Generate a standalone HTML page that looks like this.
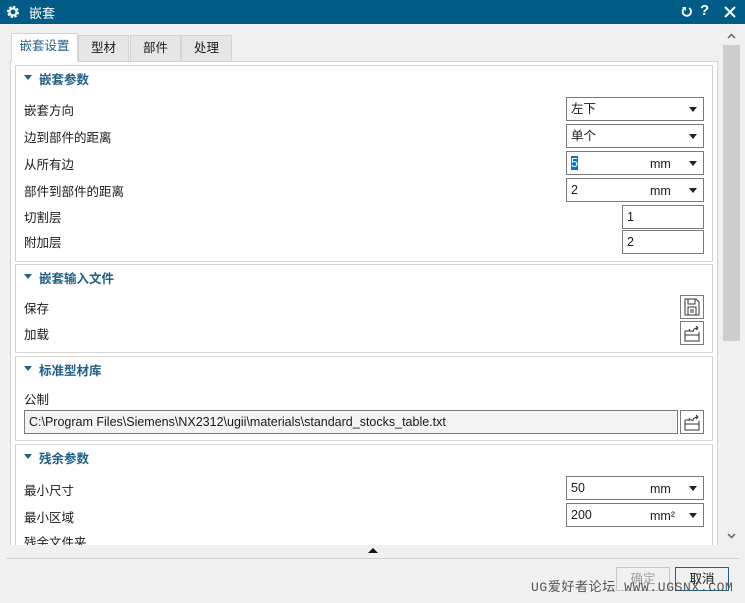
<!DOCTYPE html><html><head><meta charset="utf-8"><style>
*{box-sizing:border-box;margin:0;padding:0}
body{width:745px;height:603px;overflow:hidden;background:#f0f0f0;font-family:"Liberation Sans","Noto Sans CJK SC",sans-serif;font-size:12px;color:#1a1a1a;position:relative}
.a{position:absolute}
.title{left:0;top:0;width:745px;height:24px;background:#005c87;color:#fff;font-size:13px}
.tab{border:1px solid #d4d4d4;background:#e6e6e6;height:27px;top:35px;text-align:center;line-height:25px;font-size:12.5px}
.grp{left:15px;width:698px;background:#fff;border:1px solid #d4d4d4}
.h{color:#1f6088;font-weight:bold;font-size:12.5px}
.tri{width:0;height:0;border-left:4px solid transparent;border-right:4px solid transparent;border-top:5px solid #1f6088}
.lbl{left:24px;font-size:12.5px}
.dd{left:566px;width:138px;height:24px;border:1px solid #7a7a7a;background:#fff;padding-left:4px;line-height:22px;font-size:12.5px}
.dd .ar{position:absolute;right:6px;top:9px;width:0;height:0;border-left:4px solid transparent;border-right:4px solid transparent;border-top:5px solid #222}
.dd .u{position:absolute;left:83px;top:1px}
.tf{left:622px;width:82px;height:24px;border:1px solid #7a7a7a;background:#fff;padding-left:4px;line-height:22px;font-size:12.5px}
.ib{left:680px;width:24px;height:24px;border:1px solid #7a7a7a;background:#fff}
.btn{top:567px;height:24px;width:54px;border:1px solid #adadad;text-align:center;line-height:22px;font-size:12.5px}
</style></head><body>
<div class="a title">
<svg class="a" style="left:6px;top:5px" width="14" height="14" viewBox="0 0 14 14"><circle cx="7" cy="7" r="4.5" fill="none" stroke="#fff" stroke-width="3" stroke-dasharray="2.2 1.3"/><circle cx="7" cy="7" r="3.5" fill="none" stroke="#fff" stroke-width="2"/></svg>
<span class="a" style="left:29px;top:3px">嵌套</span>
<svg class="a" style="left:681px;top:6px" width="12" height="12" viewBox="0 0 12 12"><path d="M3 2.5A4.2 4.2 0 1 0 8 2" fill="none" stroke="#fff" stroke-width="1.8"/><path d="M1 1h4v4z" fill="#fff"/></svg>
<span class="a" style="left:700px;top:2px;font-weight:bold;font-size:15px">?</span>
<svg class="a" style="left:724px;top:6px" width="12" height="12"><path d="M1 1L11 11M11 1L1 11" stroke="#fff" stroke-width="2"/></svg>
</div>
<div class="a" style="left:10px;top:61px;width:708px;height:486px;background:#fff;border:1px solid #d4d4d4;border-bottom:none"></div>
<div class="a tab" style="left:11px;top:33px;width:67px;height:29px;background:#fff;border-bottom:none;color:#1f6088">嵌套设置</div>
<div class="a tab" style="left:78px;width:51px">型材</div>
<div class="a tab" style="left:130px;width:51px">部件</div>
<div class="a tab" style="left:181px;width:51px">处理</div>

<div class="a grp" style="top:65px;height:197px"></div>
<div class="a tri" style="left:24px;top:75px"></div><div class="a h" style="left:39px;top:69px">嵌套参数</div>
<div class="a lbl" style="top:100px">嵌套方向</div>
<div class="a lbl" style="top:127px">边到部件的距离</div>
<div class="a lbl" style="top:154px">从所有边</div>
<div class="a lbl" style="top:181px">部件到部件的距离</div>
<div class="a lbl" style="top:207px">切割层</div>
<div class="a lbl" style="top:232px">附加层</div>
<div class="a dd" style="top:97px">左下<i class="ar"></i></div>
<div class="a dd" style="top:124px">单个<i class="ar"></i></div>
<div class="a dd" style="top:151px"><span style="background:#0078d7;color:#fff">5</span><span class="u">mm</span><i class="ar"></i></div>
<div class="a dd" style="top:178px">2<span class="u">mm</span><i class="ar"></i></div>
<div class="a tf" style="top:205px">1</div>
<div class="a tf" style="top:230px">2</div>

<div class="a grp" style="top:264px;height:89px"></div>
<div class="a tri" style="left:24px;top:274px"></div><div class="a h" style="left:39px;top:268px">嵌套输入文件</div>
<div class="a lbl" style="top:298px">保存</div>
<div class="a lbl" style="top:324px">加载</div>
<div class="a ib" style="top:295px"><svg width="22" height="22"><path d="M4 3h11l3 3v13H4z M7 3v5h7V3 M7 11h8v8H7z M9 14h4M9 16h4" fill="none" stroke="#333" stroke-width="1"/></svg></div>
<div class="a ib" style="top:321px"><svg width="22" height="22"><path d="M4 9h8M4 9v10h14V10 M4 13h14 M8 7l1 2 M12 10q0-4 5-4 M15 4l2 2-2 2" fill="none" stroke="#333" stroke-width="1"/></svg></div>

<div class="a grp" style="top:356px;height:85px"></div>
<div class="a tri" style="left:24px;top:366px"></div><div class="a h" style="left:39px;top:360px">标准型材库</div>
<div class="a lbl" style="top:389px">公制</div>
<div class="a" style="left:24px;top:410px;width:654px;height:24px;border:1px solid #7a7a7a;background:#f3f3f3;padding-left:4px;line-height:22px;font-size:12.5px">C:\Program Files\Siemens\NX2312\ugii\materials\standard_stocks_table.txt</div>
<div class="a ib" style="top:410px"><svg width="22" height="22"><path d="M4 9h8M4 9v10h14V10 M4 13h14 M8 7l1 2 M12 10q0-4 5-4 M15 4l2 2-2 2" fill="none" stroke="#333" stroke-width="1"/></svg></div>

<div class="a grp" style="top:444px;height:103px;border-bottom:none"></div>
<div class="a tri" style="left:24px;top:454px"></div><div class="a h" style="left:39px;top:448px">残余参数</div>
<div class="a lbl" style="top:480px">最小尺寸</div>
<div class="a lbl" style="top:507px">最小区域</div>
<div class="a lbl" style="top:532px;height:13px;overflow:hidden">残余文件夹</div>
<div class="a dd" style="top:476px">50<span class="u">mm</span><i class="ar"></i></div>
<div class="a dd" style="top:503px">200<span class="u">mm²</span><i class="ar"></i></div>
<div class="a" style="left:0;top:545px;width:722px;height:14px;background:#f0f0f0"></div>

<div class="a" style="left:723px;top:28px;width:17px;height:517px;background:#f0f0f0"></div>
<div class="a" style="left:723px;top:45px;width:17px;height:296px;background:#cdcdcd"></div>
<svg class="a" style="left:727px;top:33px" width="9" height="6"><path d="M1 5l3.5-3.5L8 5" fill="none" stroke="#606060" stroke-width="1.5"/></svg>
<svg class="a" style="left:727px;top:533px" width="9" height="6"><path d="M1 1l3.5 3.5L8 1" fill="none" stroke="#606060" stroke-width="1.5"/></svg>
<div class="a" style="left:368px;top:548px;width:0;height:0;border-left:5px solid transparent;border-right:5px solid transparent;border-bottom:5px solid #111"></div>
<div class="a" style="left:6px;top:558px;width:733px;height:1px;background:#d2d2d2"></div>
<div class="a btn" style="left:616px;color:#a0a0a0;border-color:#c8c8c8">确定</div>
<div class="a btn" style="left:675px;border-color:#1f6088">取消</div>
<div class="a" style="left:531px;top:576px;font-family:'Liberation Mono','Noto Sans CJK SC',monospace;font-size:13px;color:#555;letter-spacing:0.6px;white-space:nowrap">UG爱好者论坛 WWW.UGSNX.COM</div>
</body></html>
